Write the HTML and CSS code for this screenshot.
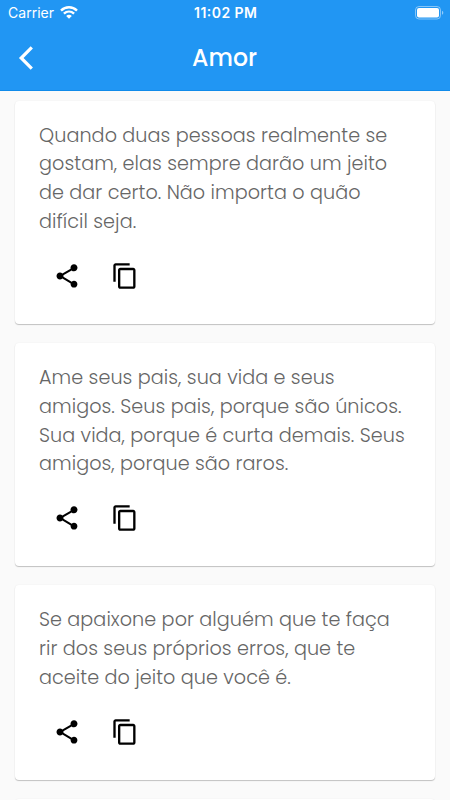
FILE: index.html
```html
<!DOCTYPE html>
<html lang="pt-BR">
<head>
    <meta charset="UTF-8">
    <meta name="viewport" content="width=device-width, initial-scale=1.0">
    <title>Amor</title>
    <link rel="stylesheet" href="styles.css">
</head>
<body>
    <svg width="0" height="0" class="sprite">
        <symbol id="share" viewBox="0 0 24 24"><path d="M18 16.08c-.76 0-1.44.3-1.96.77L8.91 12.7c.05-.23.09-.46.09-.7s-.04-.47-.09-.7l7.05-4.11c.54.5 1.25.81 2.04.81 1.66 0 3-1.34 3-3s-1.34-3-3-3-3 1.34-3 3c0 .24.04.47.09.7L8.04 9.81C7.5 9.31 6.79 9 6 9c-1.66 0-3 1.34-3 3s1.34 3 3 3c.79 0 1.5-.31 2.04-.81l7.12 4.16c-.05.21-.08.43-.08.65 0 1.61 1.31 2.92 2.92 2.92s2.92-1.31 2.92-2.92-1.31-2.92-2.92-2.92z"/></symbol>
        <symbol id="copy" viewBox="0 0 24 24"><path d="M16 1H4c-1.1 0-2 .9-2 2v14h2V3h12V1zm3 4H8c-1.1 0-2 .9-2 2v14c0 1.1.9 2 2 2h11c1.1 0 2-.9 2-2V7c0-1.1-.9-2-2-2zm0 16H8V7h11v14z"/></symbol>
    </svg>

    <header class="header">
        <div class="status">
            <div class="carrier">
                <svg width="47" height="18"><text x="0" y="14" textLength="46">Carrier</text></svg>
                <svg width="18" height="13" viewBox="0 0 18 13" fill="none" stroke="#fff" stroke-width="2.4">
                    <path d="M1 4.6C5.5.2 12.5.2 17 4.6M3.9 7.7c3-2.8 7.2-2.8 10.2 0"/>
                    <path d="M9 12.7L6.2 9.9c1.6-1.4 4-1.4 5.6 0z" fill="#fff" stroke="none"/>
                </svg>
            </div>
            <svg class="clock" width="64" height="18"><text x="0" y="14" textLength="63">11:02 PM</text></svg>
            <svg class="battery" width="29" height="14" viewBox="0 0 29 14">
                <rect x=".5" y=".5" width="25" height="12.5" rx="3.5" fill="none" stroke="#fff" stroke-opacity=".45"/>
                <rect x="2" y="2" width="22" height="9.5" rx="2" fill="#fff"/>
                <path d="M27 4.8c1.8.8 1.8 3.2 0 4z" fill="#fff" fill-opacity=".5"/>
            </svg>
        </div>
        <div class="navbar">
            <svg class="back" width="16" height="26" viewBox="0 0 16 26" fill="none" stroke="#fff" stroke-width="3.2"><path d="M13.8 2.4L3.2 13l10.6 10.6"/></svg>
            <svg class="title" width="68" height="36"><text x="1" y="26" textLength="65" lengthAdjust="spacingAndGlyphs">Amor</text></svg>
        </div>
    </header>

    <main class="list">
        <article class="card">
            <div class="quote">
                <p>Quando duas pessoas realmente se</p>
                <p>gostam, elas sempre darão um jeito</p>
                <p>de dar certo. Não importa o quão</p>
                <p>difícil seja.</p>
            </div>
            <div class="actions">
                <svg class="icon"><use href="#share"/></svg>
                <svg class="icon"><use href="#copy"/></svg>
            </div>
        </article>
        <article class="card">
            <div class="quote">
                <p>Ame seus pais, sua vida e seus</p>
                <p>amigos. Seus pais, porque são únicos.</p>
                <p>Sua vida, porque é curta demais. Seus</p>
                <p>amigos, porque são raros.</p>
            </div>
            <div class="actions">
                <svg class="icon"><use href="#share"/></svg>
                <svg class="icon"><use href="#copy"/></svg>
            </div>
        </article>
        <article class="card">
            <div class="quote">
                <p>Se apaixone por alguém que te faça</p>
                <p>rir dos seus próprios erros, que te</p>
                <p>aceite do jeito que você é.</p>
            </div>
            <div class="actions">
                <svg class="icon"><use href="#share"/></svg>
                <svg class="icon"><use href="#copy"/></svg>
            </div>
        </article>
        <article class="card"></article>
    </main>
</body>
</html>
```

FILE: styles.css
```css
* {
    box-sizing: border-box;
}
body {
    margin: 0;
    height: 800px;
    overflow: hidden;
    background: #fafafa;
    font-family: Poppins, Inter, sans-serif;
}
svg {
    display: block;
    flex: none;
}
.sprite {
    position: absolute;
}
.header {
    height: 91px;
    background: #2196f3;
    border-bottom: 1px solid #108bea;
    color: #fff;
    fill: #fff;
}
.status {
    display: grid;
    grid-template-columns: 1fr 64px 1fr;
    align-items: center;
    height: 25px;
    padding: 0 6px 0 8px;
    font-family: Inter, sans-serif;
    font-size: 14px;
}
.carrier {
    display: flex;
    align-items: center;
    gap: 5px;
}
.clock {
    font-weight: 600;
}
.battery {
    justify-self: end;
}
.navbar {
    display: grid;
    grid-template-columns: 1fr 68px 1fr;
    align-items: center;
    height: 66px;
    padding: 0 18px;
}
.title {
    font-size: 24px;
    font-weight: 500;
}
.list {
    display: flex;
    flex-direction: column;
    gap: 19px;
    height: 709px;
    overflow: hidden;
    padding: 9.6px 15px 0;
}
.card {
    flex: none;
    padding: 21px 24px 24px;
    background: #fff;
    border-radius: 4px;
    box-shadow: 0 1px 1px rgba(0,0,0,0.22), 0 0 2px rgba(0,0,0,0.06);
}
.quote {
    font-size: 19.2px;
    font-weight: 300;
    line-height: 28.8px;
    letter-spacing: 0.06px;
    color: #666;
    white-space: nowrap;
}
.quote p {
    margin: 0;
}
.actions {
    display: flex;
    gap: 30px;
    padding: 25.2px 0 10px 14px;
}
.icon {
    width: 28px;
    height: 28px;
}
```
